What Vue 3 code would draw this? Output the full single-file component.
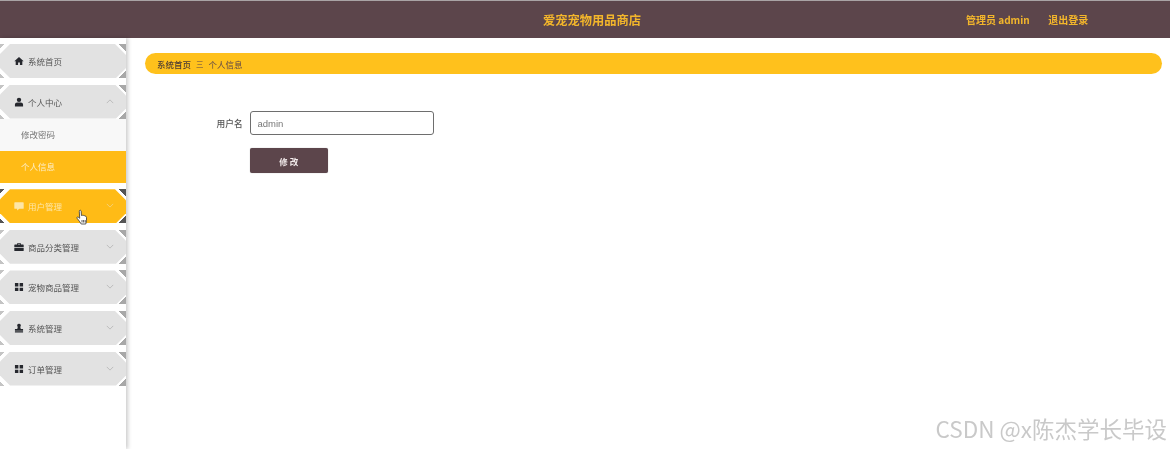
<script setup>
const paths = {
  home: 'M8 1.500 .5 8.500h2.200V14.500h3.800v-4h3v4h3.800V8.500h2.200z',
  user: 'M8 1a3.500 3.500 0 1 1 0 7 3.500 3.500 0 0 1 0-7zM1.500 15v-3c0-1.900 1.800-3.200 3.400-3.200h6.200c1.600 0 3.400 1.300 3.400 3.200v3z',
  chat: 'M1.500 2h13a1 1 0 0 1 1 1v8.500a1 1 0 0 1-1 1H8.500l-3.500 2.500v-2.500H1.500a1 1 0 0 1-1-1V3a1 1 0 0 1 1-1z',
  case: 'M5 4V2h6V4h3.500a1 1 0 0 1 1 1v3H.5V5a1 1 0 0 1 1-1zM6.500 4h3v-.7h-3zM.5 9h15v4.500a1 1 0 0 1-1 1h-13a1 1 0 0 1-1-1z',
  grid: 'M1.500 1.500h5.500v5.500H1.500zM9 1.500h5.500v5.500H9zM1.500 9h5.500v5.500H1.500zM9 9h5.500v5.500H9z',
  stamp: 'M8 1a3 3 0 0 1 2 5.200L10.800 9.500H14.500v2.800H1.500V9.500h3.700L6 6.200A3 3 0 0 1 8 1zM1.500 13.200h13V15h-13z'
}
const menus = [
  { name: '系统首页', icon: 'home', chevron: '' },
  { name: '个人中心', icon: 'user', chevron: 'up', children: [
    { name: '修改密码' },
    { name: '个人信息', active: true }
  ] },
  { name: '用户管理', icon: 'chat', chevron: 'down', hover: true },
  { name: '商品分类管理', icon: 'case', chevron: 'down' },
  { name: '宠物商品管理', icon: 'grid', chevron: 'down' },
  { name: '系统管理', icon: 'stamp', chevron: 'down' },
  { name: '订单管理', icon: 'grid', chevron: 'down' }
]
</script>

<template>
  <div class="page">
    <header class="topbar">
      <div class="title">爱宠宠物用品商店</div>
      <div class="account">
        <span>管理员 admin</span>
        <span>退出登录</span>
      </div>
    </header>

    <div class="body">
      <aside class="sidebar">
        <div v-for="m in menus" :key="m.name" class="group">
          <div class="head" :class="{ hover: m.hover }">
            <svg class="icon" viewBox="0 0 16 16"><path :d="paths[m.icon]" /></svg>
            <span class="label">{{ m.name }}</span>
            <svg v-if="m.chevron" class="chev" :class="m.chevron" viewBox="0 0 10 6">
              <path d="M1 1l4 4 4-4" />
            </svg>
          </div>
          <div v-if="m.children" class="subs">
            <div v-for="c in m.children" :key="c.name" class="sub" :class="{ active: c.active }">{{ c.name }}</div>
          </div>
        </div>
        <svg class="cursor" viewBox="0 0 12 17">
          <path d="M3.500 1.500c.8-.6 1.600 0 1.700.8l.2 4.200 1-.2 1.200.1 1 .3 1.200.5.700 1.200v3.100L9.800 15H5.200L3.400 12.300 1 9.200c-.4-.9.500-1.500 1.200-1.100l1.500 1.200L3.300 2.600c0-.5 0-.9.200-1.100z" />
          <path d="M6 11v2.500M7.600 11v2.500M9.200 11v2.500" />
        </svg>
      </aside>

      <main class="main">
        <nav class="crumb">
          <span class="crumb-link">系统首页</span>
          <span class="crumb-sep">三</span>
          <span class="crumb-now">个人信息</span>
        </nav>
        <form class="form" @submit.prevent>
          <div class="row">
            <label class="field-label">用户名</label>
            <input class="field" value="admin" readonly />
          </div>
          <button class="submit" type="button">修 改</button>
        </form>
      </main>
    </div>

    <div class="watermark">CSDN @x陈杰学长毕设</div>
  </div>
</template>

<style>
html, body { margin: 0; background: #fff; overflow: hidden; }
</style>

<style scoped>
.page {
  position: relative;
  width: 1170px;
  height: 449px;
  overflow: hidden;
  background: #fff;
  font-family: "Noto Sans CJK SC", "Liberation Sans", sans-serif;
  display: flex;
  flex-direction: column;
  filter: blur(0.4px);
}
.topbar {
  position: relative;
  height: 38px;
  flex: none;
  box-sizing: border-box;
  border-top: 1px solid #a9a3a5;
  background: #5c454b;
  color: #f3b62b;
  font-weight: 700;
  display: flex;
  align-items: center;
  justify-content: center;
}
.title {
  font-size: 12.250px;
  margin-left: 14px;
  margin-top: 1px;
}
.account {
  position: absolute;
  left: 966px;
  top: 12px;
  display: flex;
  gap: 18.500px;
  font-size: 10px;
  line-height: 14px;
}
.body {
  flex: 1;
  display: flex;
  min-height: 0;
}
.sidebar {
  position: relative;
  width: 126px;
  flex: none;
  box-sizing: border-box;
  padding-top: 6px;
  box-shadow: 2px 0 4px rgba(0, 0, 0, 0.2);
  display: flex;
  flex-direction: column;
  gap: 6.600px;
}
.head {
  position: relative;
  height: 34px;
  display: flex;
  align-items: center;
  padding-left: 14px;
  color: #555;
  font-size: 8.500px;
  background:
    linear-gradient(225deg, #a8a8a8 5px, transparent 5.500px) top right / 12px 12px no-repeat,
    linear-gradient(315deg, #a8a8a8 5px, transparent 5.500px) bottom right / 12px 12px no-repeat,
    linear-gradient(135deg, #c4c4c4 3px, transparent 3.500px) top left / 8px 8px no-repeat,
    linear-gradient(45deg, #c4c4c4 3px, transparent 3.500px) bottom left / 8px 8px no-repeat;
}
.head::before {
  content: "";
  position: absolute;
  inset: 0;
  background: #e2e2e2;
  clip-path: polygon(10px 0, 115px 0, 126px 11px, 126px 24px, 116px 34px, 10px 34px, 0 24px, 0 10px);
}
.head > * { position: relative; }
.head.hover {
  color: #fde6a8;
  background:
    linear-gradient(225deg, #555 5px, transparent 5.500px) top right / 12px 12px no-repeat,
    linear-gradient(315deg, #555 5px, transparent 5.500px) bottom right / 12px 12px no-repeat,
    linear-gradient(135deg, #555 3px, transparent 3.500px) top left / 8px 8px no-repeat,
    linear-gradient(45deg, #555 3px, transparent 3.500px) bottom left / 8px 8px no-repeat;
}
.head.hover::before { background: #ffbb16; }
.icon {
  width: 10px;
  height: 10px;
  margin-right: 4px;
  fill: #26282e;
  flex: none;
}
.hover .icon { fill: #fde6a8; }
.chev {
  position: absolute;
  left: 106px;
  top: 14px;
  width: 8px;
  height: 5px;
  fill: none;
  stroke: #b4b4b4;
  stroke-width: 1;
}
.chev.up { transform: rotate(180deg); }
.hover .chev { stroke: #f2d58a; }
.subs {
  background: #f8f8f8;
  font-size: 8.500px;
  color: #777;
}
.sub {
  height: 32px;
  line-height: 31px;
  padding-left: 21px;
}
.sub.active {
  background: #ffbb16;
  color: #fdeec8;
}
.cursor {
  position: absolute;
  left: 76px;
  top: 171px;
  width: 12px;
  height: 17px;
  fill: #fff;
  stroke: #333;
  stroke-width: 0.8;
}
.main {
  flex: 1;
  min-width: 0;
  padding: 15px 8px 0 18.500px;
}
.crumb {
  height: 21px;
  border-radius: 11px;
  background: #ffc11c;
  display: flex;
  align-items: center;
  padding-left: 12.500px;
  font-size: 8.500px;
  color: #5c454b;
}
.crumb-link { font-weight: 500; color: #4a3a35; }
.crumb-sep { margin: 0 5px 0 5px; font-size: 7.500px; }
.form {
  padding: 37px 0 0 72px;
  display: flex;
  flex-direction: column;
  gap: 13px;
}
.row {
  display: flex;
  align-items: center;
}
.field-label {
  width: 33px;
  font-size: 8.700px;
  color: #555;
  font-weight: 500;
}
.field {
  width: 184.500px;
  height: 24px;
  box-sizing: border-box;
  border: 1.500px solid #6e6e6e;
  border-radius: 3px;
  padding: 0 7px;
  outline: none;
  font-family: "Liberation Sans", sans-serif;
  font-size: 9.500px;
  color: #777;
  background: #fff;
}
.submit {
  margin-left: 33px;
  width: 78.500px;
  height: 25px;
  border: none;
  border-radius: 2px;
  background: #5c454b;
  color: #f3ecec;
  font-family: inherit;
  font-size: 8.500px;
  font-weight: 700;
  box-shadow: 0 0 1px rgba(0, 0, 0, 0.4);
}
.watermark {
  position: absolute;
  right: 3px;
  bottom: 7px;
  font-size: 22.500px;
  line-height: 28px;
  color: #c9c9c9;
  white-space: nowrap;
}
</style>
